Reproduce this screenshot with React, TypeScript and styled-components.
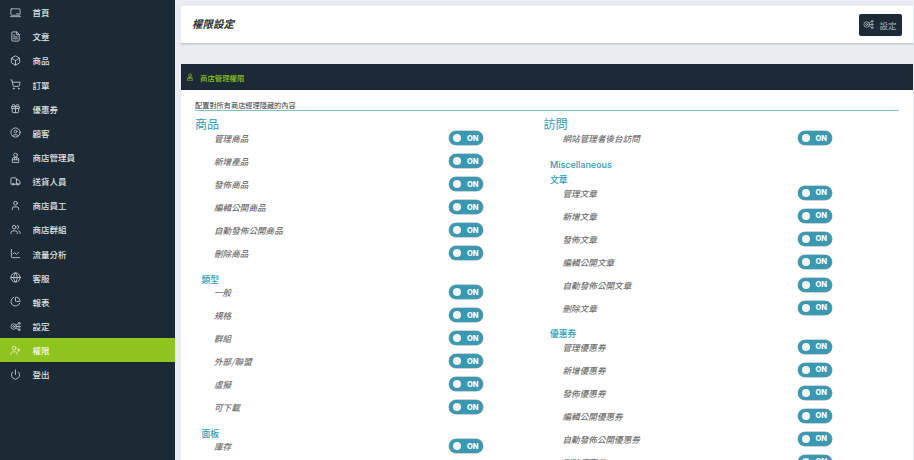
import React from "react";
import styled, { createGlobalStyle } from "styled-components";
import {
  Box, ChartLine, CircleUser, FileText, Globe, ChartPie, Power, ShoppingCart, Truck, User, UserPlus, Users, Gift,
} from "lucide-react";

const Global = createGlobalStyle`
  html, body { margin: 0; padding: 0; height: 460px; overflow: hidden; background: #e9edf1; }
  body { font-family: "Noto Sans CJK TC", "Noto Sans", sans-serif; }
`;

const Shell = styled.div`
  display: flex;
  width: 914px;
  height: 460px;
  overflow: hidden;
`;

const Sidebar = styled.nav`
  flex: 0 0 174.5px;
  background: #1c2a35;
`;

const NavItem = styled.div<{ $active?: boolean }>`
  display: flex;
  align-items: center;
  height: 24.17px;
  padding-left: 10px;
  background: ${(p) => (p.$active ? "#8fc31f" : "transparent")};
  color: ${(p) => (p.$active ? "#f4f8e8" : "#dfe3e6")};
  font-size: 8.5px;
  font-weight: 500;
  svg { flex: 0 0 11px; width: 11px; height: 11px; margin-right: 11.5px; opacity: 0.85; }
`;

const Main = styled.main`
  flex: 1;
  display: flex;
  flex-direction: column;
  padding: 6px 1.5px 0 6.5px;
  min-width: 0;
`;

const PageHeader = styled.header`
  flex: 0 0 37px;
  display: flex;
  align-items: center;
  justify-content: space-between;
  padding: 0 11px;
  background: #fff;
  border-bottom: 1px solid #c3cbd0;
  box-shadow: 0 1px 1px #d5dbdf;
  box-sizing: content-box;
  height: 37px;
  margin-bottom: 20px;
`;

const PageTitle = styled.h1`
  margin: 0 0 3px;
  font-size: 10.5px;
  font-style: italic;
  font-weight: 700;
  color: #2b3034;
`;

const SettingButton = styled.button`
  display: flex;
  align-items: center;
  justify-content: center;
  gap: 5px;
  width: 43px;
  height: 22px;
  padding: 0;
  border: 0;
  border-radius: 2px;
  background: #1c2a35;
  color: #a9b1b6;
  font-family: inherit;
  font-size: 8.5px;
  svg { width: 11px; height: 11px; }
`;

const Card = styled.section`
  flex: 1;
  background: #fff;
`;

const CardHeader = styled.div`
  display: flex;
  align-items: center;
  height: 26px;
  padding-left: 5px;
  background: #1b2a36;
  color: #8fc31f;
  font-size: 7.4px;
  font-weight: 500;
  svg { width: 8px; height: 8px; margin-right: 6px; }
`;

const CardBody = styled.div`
  padding: 9.5px 13.5px 0 14px;
`;

const Description = styled.p`
  margin: 0 0 7px;
  height: 10.5px;
  line-height: 10px;
  border-bottom: 1px solid #7fc0cf;
  color: #33383c;
  font-size: 7.2px;
`;

const Columns = styled.div`
  display: grid;
  grid-template-columns: 348.5px 1fr;
`;

const Column = styled.div`
  width: 288px;
`;

const GroupTitle = styled.h2`
  margin: 0;
  height: 12px;
  line-height: 12px;
  color: #2e9db5;
  font-size: 12px;
  font-weight: 400;
`;

const MiscTitle = styled.h3`
  margin: 12.5px 0 0 6.5px;
  height: 12px;
  line-height: 12px;
  color: #2e9db5;
  font-family: Inter, "Noto Sans", sans-serif;
  font-size: 9px;
  font-weight: 500;
`;

const SubTitle = styled.h4<{ $gap: number }>`
  margin: ${(p) => p.$gap}px 0 0 6.5px;
  height: 9.5px;
  line-height: 10px;
  color: #2e9db5;
  font-size: 8.8px;
  font-weight: 500;
`;

const Row = styled.div`
  display: flex;
  align-items: center;
  justify-content: space-between;
  height: 16px;
  margin-bottom: 7px;
  padding-left: 19px;
  color: #707070;
  font-size: 8.6px;
  font-style: italic;
  font-weight: 500;
`;

const Toggle = styled.span`
  display: flex;
  align-items: center;
  gap: 6px;
  box-sizing: border-box;
  width: 34px;
  height: 14px;
  padding-left: 4px;
  border-radius: 7px;
  background: #3a99b0;
  box-shadow: 0 0 0 0.5px #9aa7ad;
  color: #fff;
  font-family: Inter, "Noto Sans", sans-serif;
  font-size: 7.5px;
  font-style: normal;
  font-weight: 800;
`;

const Knob = styled.i`
  flex: 0 0 8px;
  height: 8px;
  border-radius: 50%;
  background: #f2f4f5;
`;

const svgProps = {
  viewBox: "0 0 24 24",
  fill: "none",
  stroke: "currentColor",
  strokeWidth: 1.8,
  strokeLinecap: "round" as const,
  strokeLinejoin: "round" as const,
};

const ScreenIcon = () => (
  <svg {...svgProps}>
    <rect x="2" y="4" width="20" height="14" rx="1" />
    <path d="M1 21h22M14 15h5" />
  </svg>
);

const ManagerIcon = () => (
  <svg {...svgProps}>
    <circle cx="12" cy="6.5" r="4" />
    <path d="M5 22v-6a4 4 0 0 1 4-4h6a4 4 0 0 1 4 4v6zM5 17h14M10 12v5M14 12v5" />
  </svg>
);

const LinkGearIcon = () => (
  <svg {...svgProps}>
    <circle cx="8" cy="12" r="6" />
    <circle cx="8" cy="12" r="2" />
    <circle cx="20" cy="5" r="2" />
    <circle cx="20" cy="12" r="2" />
    <circle cx="20" cy="19" r="2" />
    <path d="M13 9l5-3M14 12h4M13 15l5 3" />
  </svg>
);

const nav: [string, React.ReactNode][] = [
  ["首頁", <ScreenIcon />],
  ["文章", <FileText />],
  ["商品", <Box />],
  ["訂單", <ShoppingCart />],
  ["優惠券", <Gift />],
  ["顧客", <CircleUser />],
  ["商店管理員", <ManagerIcon />],
  ["送貨人員", <Truck />],
  ["商店員工", <User />],
  ["商店群組", <Users />],
  ["流量分析", <ChartLine />],
  ["客服", <Globe />],
  ["報表", <ChartPie />],
  ["設定", <LinkGearIcon />],
  ["權限", <UserPlus />],
  ["登出", <Power />],
];

const Perm = ({ label }: { label: string }) => (
  <Row>
    <span>{label}</span>
    <Toggle>
      <Knob />
      ON
    </Toggle>
  </Row>
);

const verbs = (noun: string) => [
  `管理${noun}`,
  `新增${noun}`,
  `發佈${noun}`,
  `編輯公開${noun}`,
  `自動發佈公開${noun}`,
  `刪除${noun}`,
];

const PermList = ({ items }: { items: string[] }) => (
  <>
    {items.map((t) => (
      <Perm key={t} label={t} />
    ))}
  </>
);

export default function App() {
  return (
    <Shell>
      <Global />
      <Sidebar>
        {nav.map(([label, icon]) => (
          <NavItem key={label} $active={label === "權限"}>
            {icon}
            {label}
          </NavItem>
        ))}
      </Sidebar>
      <Main>
        <PageHeader>
          <PageTitle>權限設定</PageTitle>
          <SettingButton>
            <LinkGearIcon />
            設定
          </SettingButton>
        </PageHeader>
        <Card>
          <CardHeader>
            <ManagerIcon />
            商店管理權限
          </CardHeader>
          <CardBody>
            <Description>配置對所有商店經理隱藏的內容</Description>
            <Columns>
              <Column>
                <GroupTitle>商品</GroupTitle>
                <PermList
                  items={["管理商品", "新增產品", "發佈商品", "編輯公開商品", "自動發佈公開商品", "刪除商品"]}
                />
                <SubTitle $gap={13.5}>類型</SubTitle>
                <PermList items={["一般", "規格", "群組", "外部/聯盟", "虛擬", "可下載"]} />
                <SubTitle $gap={13.5}>面板</SubTitle>
                <PermList items={["庫存"]} />
              </Column>
              <Column>
                <GroupTitle>訪問</GroupTitle>
                <PermList items={["網站管理者後台訪問"]} />
                <MiscTitle>Miscellaneous</MiscTitle>
                <SubTitle $gap={4.5}>文章</SubTitle>
                <PermList items={verbs("文章")} />
                <SubTitle $gap={13.5}>優惠券</SubTitle>
                <PermList items={verbs("優惠券")} />
              </Column>
            </Columns>
          </CardBody>
        </Card>
      </Main>
    </Shell>
  );
}
